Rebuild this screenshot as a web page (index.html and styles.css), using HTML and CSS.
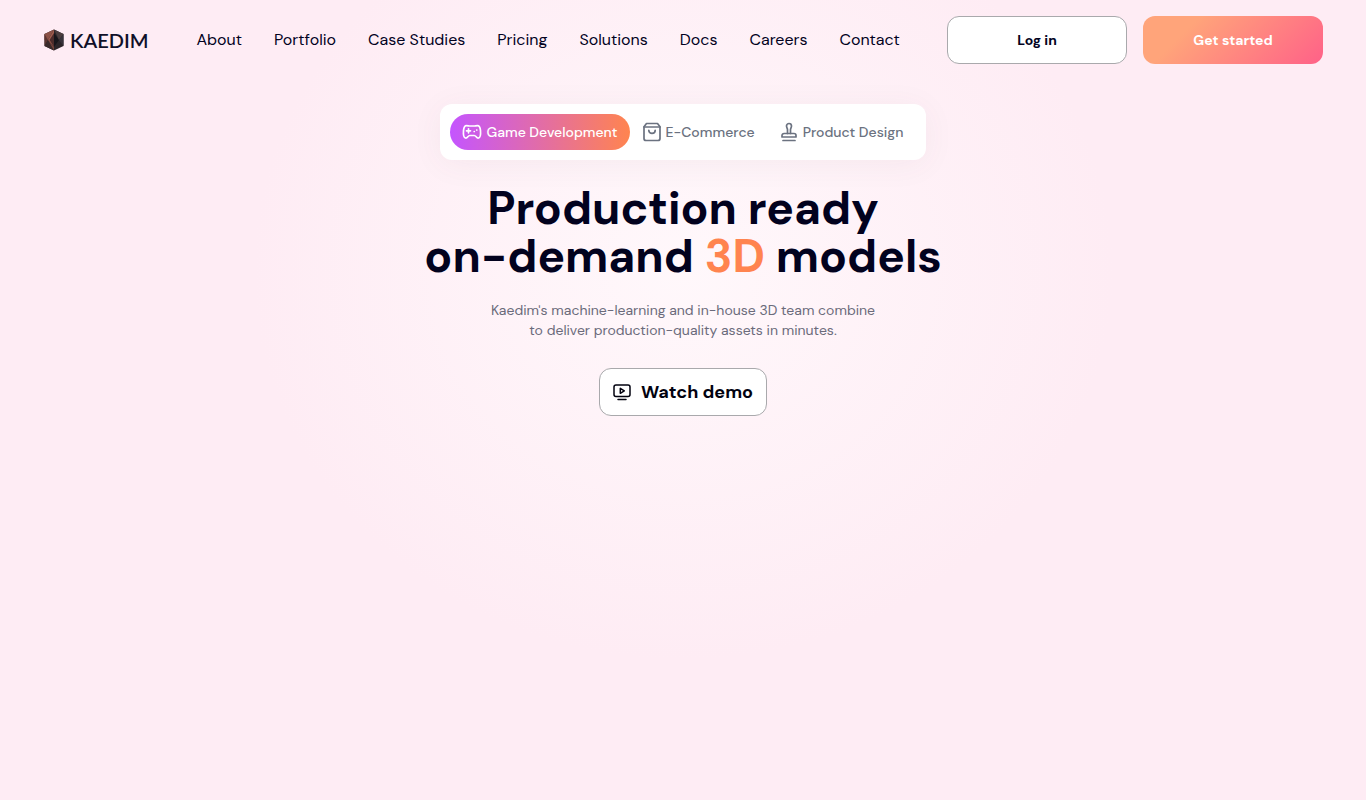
FILE: index.html
```html
<!DOCTYPE html>
<html lang="en">
<head>
    <meta charset="UTF-8">
    <meta name="viewport" content="width=device-width, initial-scale=1.0">
    <title>Kaedim</title>
    <link rel="stylesheet" href="styles.css">
</head>
<body>
    <header class="navbar">
        <a href="#" class="logo">
            <svg width="20" height="22" viewBox="0 0 20 22">
                <path d="M10 0.5 19.5 5v12L10 21.5 0.5 17V5z" fill="#2b2529"/>
                <path d="M10 0.5 0.5 5v6L4 11z" fill="#8c5146"/>
                <path d="M0.5 5 4 11 0.5 17z" fill="#5b3531"/>
                <path d="M0.5 17 4 11l6 10.5z" fill="#3a2a2b"/>
                <path d="M10 0.5 4 11l6 7z" fill="#a15d4e"/>
                <path d="M4 11l6 7v3.5z" fill="#75443b"/>
                <path d="M10 4 5.5 11l4.5 7z" fill="#4b2c2b"/>
                <path d="M10 4l5 7-5 7z" fill="#17161b"/>
                <path d="M10 0.5 19.5 5 15 11z" fill="#4b3d3e"/>
                <path d="M19.5 5v12L15 11z" fill="#37333a"/>
            </svg>
            <span>KAEDIM</span>
        </a>
        <nav class="nav-links">
            <a href="#">About</a>
            <a href="#">Portfolio</a>
            <a href="#">Case Studies</a>
            <a href="#">Pricing</a>
            <a href="#">Solutions</a>
            <a href="#">Docs</a>
            <a href="#">Careers</a>
            <a href="#">Contact</a>
        </nav>
        <div class="nav-buttons">
            <button class="btn btn-outline">Log in</button>
            <button class="btn btn-gradient">Get started</button>
        </div>
    </header>

    <main class="hero">
        <div class="tabs">
            <button class="tab active">
                <svg class="icon" width="20" height="20" viewBox="0 0 20 20">
                    <path d="M4.5 3.6c1.5 0 2 .4 3 .4h5c1 0 1.500-.4 3-.4 1.900 0 2.700 1.600 3 5 .3 3.500.4 6.900-2 7.400-2.200.4-2.300-2.500-4.300-2.500H7.800c-2 0-2.100 2.900-4.300 2.500-2.400-.5-2.300-3.900-2-7.400.3-3.400 1.100-5 3-5z"/>
                    <path d="M6.500 6.800v4M4.500 8.800h4M12.200 9.500h.1M14.700 8h.1"/>
                </svg>
                Game Development
            </button>
            <button class="tab">
                <svg class="icon" width="20" height="20" viewBox="0 0 20 20">
                    <path d="M4.500 1.500h11L18 4.800V16.500a2 2 0 0 1-2 2H4a2 2 0 0 1-2-2V4.800z"/>
                    <path d="M2 5h16M6.800 8.300c0 4.200 6.400 4.200 6.400 0"/>
                </svg>
                E-Commerce
            </button>
            <button class="tab">
                <svg class="icon" width="20" height="20" viewBox="0 0 20 20">
                    <path d="M8.500 11.500V7.500C8.500 6.500 7.500 5.500 7.500 4a2.500 2.500 0 0 1 5 0c0 1.500-1 2.500-1 3.500v4"/>
                    <path d="M5 11.500h10a2 2 0 0 1 2 2V15H3v-1.500a2 2 0 0 1 2-2zM4 18.500h12"/>
                </svg>
                Product Design
            </button>
        </div>
        <h1>Production ready<br>on-demand <span class="highlight">3D</span> models</h1>
        <p>Kaedim's machine-learning and in-house 3D team combine<br>to deliver production-quality assets in minutes.</p>
        <button class="btn-demo">
            <svg class="icon" width="18" height="18" viewBox="0 0 18 18">
                <rect x="1" y="2" width="16" height="11.5" rx="2"/>
                <path d="M7.300 5.300v5l4-2.500zM5 16.500h8"/>
            </svg>
            Watch demo
        </button>
    </main>
</body>
</html>
```
FILE: styles.css
```css
* {
    box-sizing: border-box;
}

body {
    margin: 0;
    min-height: 100vh;
    font-family: "DM Sans", Inter, sans-serif;
    color: #02021e;
    background: radial-gradient(430px 390px at 50% 270px, #fff8fb, #feecf4) #feecf4;
}

button {
    font-family: inherit;
    cursor: pointer;
}

.navbar {
    display: flex;
    align-items: center;
    height: 80px;
    padding: 0 43px 0 44px;
}

.logo {
    display: flex;
    align-items: center;
    gap: 6px;
    color: #101028;
    font-family: Lato, sans-serif;
    font-size: 20px;
    font-weight: 600;
    text-decoration: none;
}

.nav-links {
    display: flex;
    gap: 32px;
    margin-left: 48px;
}

.nav-links a {
    color: #02021e;
    font-size: 16px;
    line-height: 24px;
    text-decoration: none;
    white-space: nowrap;
}

.nav-buttons {
    display: flex;
    gap: 16px;
    margin-left: auto;
}

.btn {
    width: 180px;
    height: 48px;
    border-radius: 12px;
    font-size: 14px;
    font-weight: 700;
}

.btn-outline {
    border: 1px solid #a9a9ac;
    background: #fff;
    color: #02021e;
}

.btn-gradient {
    border: none;
    background: linear-gradient(135deg, #ffa47a 25%, #ff6188 100%);
    color: #fff;
}

.hero {
    display: flex;
    flex-direction: column;
    align-items: center;
    padding-top: 24px;
    text-align: center;
}

.tabs {
    display: flex;
    padding: 10px;
    border-radius: 12px;
    background: #fff;
    box-shadow: 0 4px 32px rgba(100, 60, 80, 0.06);
}

.tab {
    display: flex;
    align-items: center;
    gap: 4px;
    height: 36px;
    padding: 0 12px;
    border: none;
    border-radius: 18px;
    background: none;
    color: #6b7280;
    font-size: 14px;
    font-weight: 500;
}

.tab.active {
    background: linear-gradient(90deg, #c455ff, #ff844f);
    color: #fff;
}

.icon {
    fill: none;
    stroke: currentColor;
    stroke-width: 1.7;
    stroke-linecap: round;
    stroke-linejoin: round;
}

h1 {
    margin: 24px 0 0;
    font-size: 46px;
    line-height: 48px;
    font-weight: 700;
}

.highlight {
    color: #ff844f;
}

.hero p {
    margin: 20px 0 28px;
    color: #6b6b7b;
    font-size: 14px;
    line-height: 20px;
}

.btn-demo {
    display: flex;
    align-items: center;
    gap: 10px;
    height: 48px;
    padding: 0 13px;
    border: 1px solid #a9a9ac;
    border-radius: 12px;
    background: #fff;
    color: #02020f;
    font-size: 18px;
    font-weight: 700;
}

.btn-demo .icon {
    stroke-width: 1.5;
}
```
